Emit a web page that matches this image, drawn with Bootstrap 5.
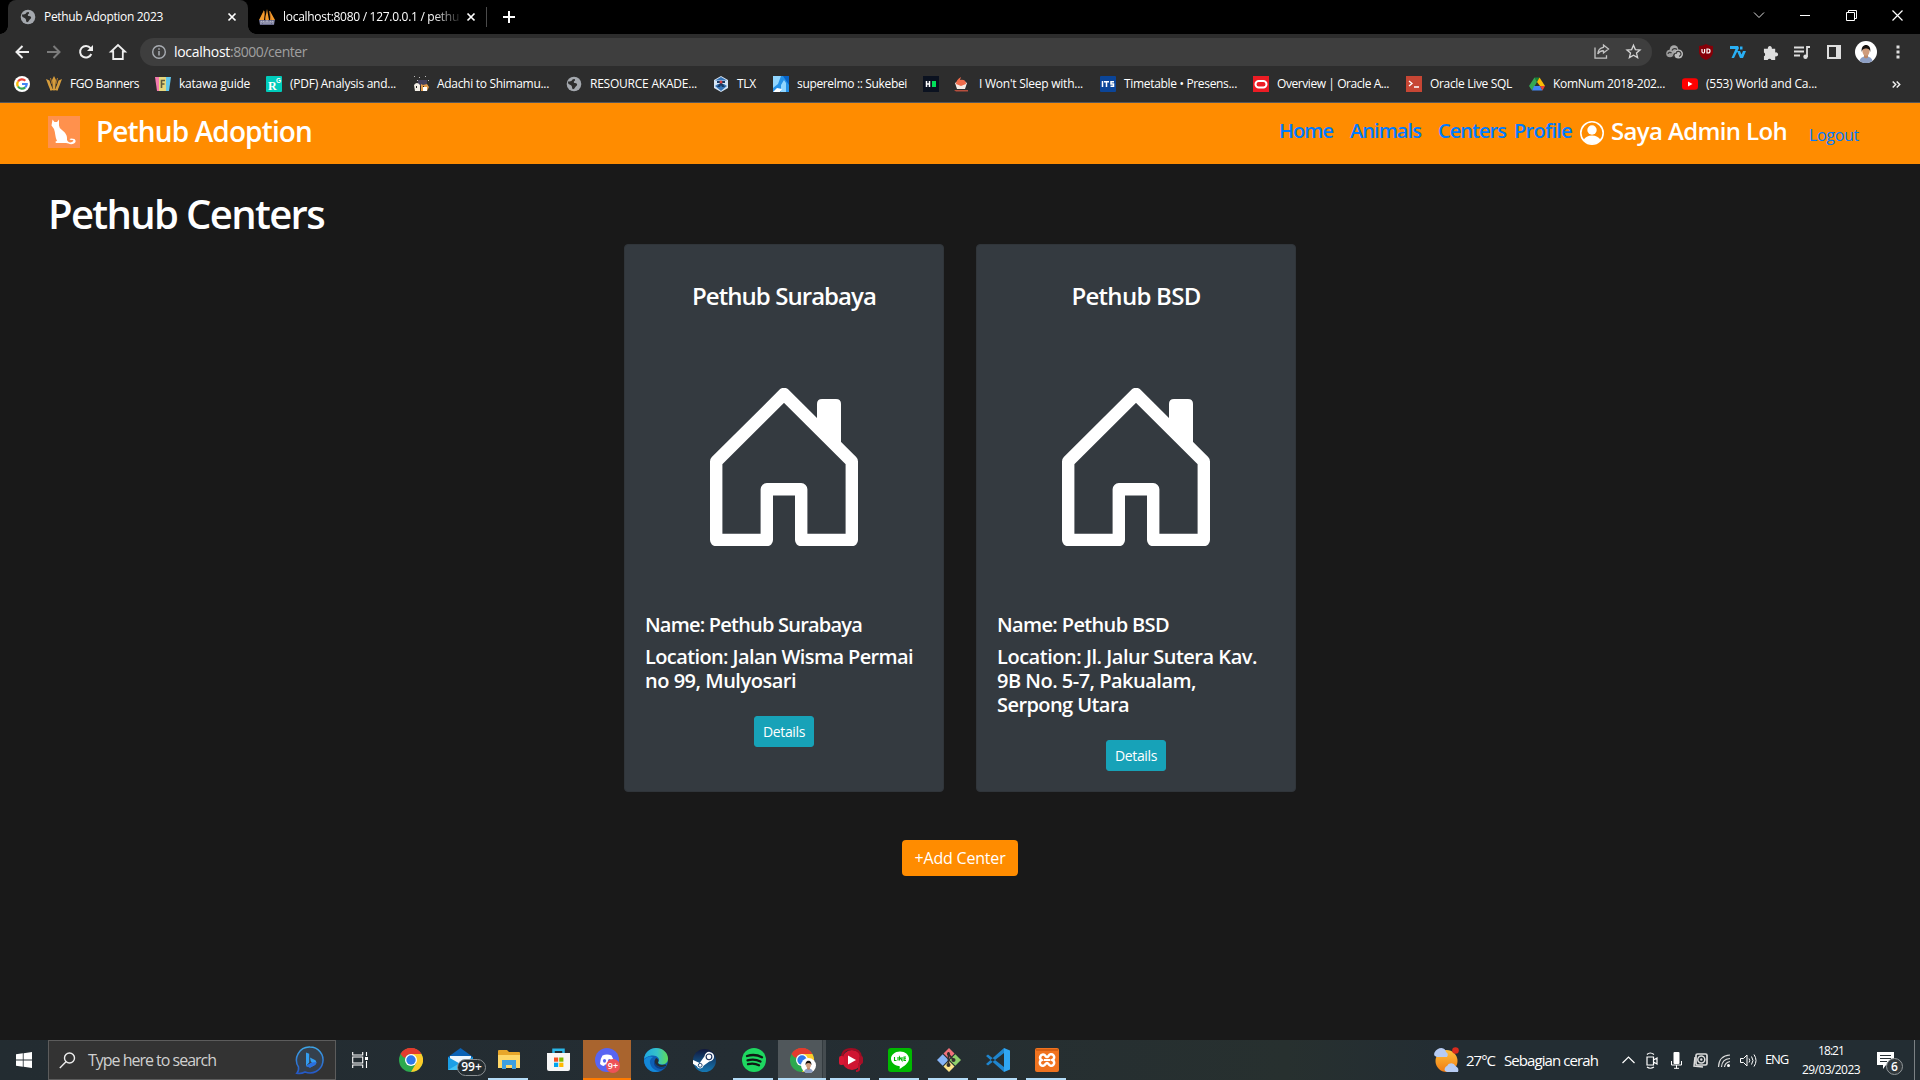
<!DOCTYPE html>
<html lang="en">
<head>
<meta charset="utf-8">
<title>Pethub Adoption 2023</title>
<link href="https://cdn.jsdelivr.net/npm/bootstrap@5.3.0/dist/css/bootstrap.min.css" rel="stylesheet">
<style>
body{font-family:"Open Sans","Noto Sans",sans-serif;font-stretch:94%;background:#191919;color:#fff;width:1920px;height:1080px;overflow:hidden;line-height:1.5}
svg{display:block;flex:none;overflow:visible}
[data-w]{display:inline-block;white-space:nowrap}
.slot{display:flex;align-items:center;justify-content:center;flex:none;width:32px}
.tabstrip{height:34px;background:#000;font-size:12px}
.tab-on{width:240px;margin-left:8px;padding:0 10px 0 12px;background:#2d2d2d;border-radius:8px 8px 0 0;position:relative}
.tab-on::before,.tab-on::after{content:"";position:absolute;bottom:0;width:8px;height:8px}
.tab-on::before{left:-8px;background:radial-gradient(circle at 0 0,transparent 7.5px,#2d2d2d 8px)}
.tab-on::after{right:-8px;background:radial-gradient(circle at 100% 0,transparent 7.5px,#2d2d2d 8px)}
.tab-off{width:239px;padding:0 9px 0 11px;border-right:1px solid #4a4a4a;height:20px}
.fade-text{width:178px;white-space:nowrap;-webkit-mask-image:linear-gradient(90deg,#000 150px,transparent 180px)}
.toolbar{height:36px;background:#2d2d2d}
.omni{width:1512px;height:28px;border-radius:14px;background:#3e3e3e;font-size:14px;line-height:20px;padding-bottom:1px;color:#a0a0a0}
.marks{height:33px;background:#2d2d2d;font-size:12px;border-bottom:1px solid #55565a;padding:0 0 4px 14px}
.marks .bm{flex:none;display:flex;align-items:center;gap:8px;height:28px}
.site-nav{height:61px;background:#ff8c00;padding:0 61px 6px 48px}
.site-nav a{color:#007bff;text-decoration:none;font-weight:600;font-size:20px;line-height:24px}
.site-nav a.thin{font-weight:400;font-size:16px}
.site-nav .logo{margin-top:3px}
.site-nav .avatar{margin-top:5px}
.brand-name{font-size:28px;font-weight:600;line-height:34px}
.user-name{font-size:24px;font-weight:600;line-height:29px}
.page{height:876px;padding:26px 48px 0}
.page h1{font-size:40px;font-weight:600;line-height:48px;margin:0 0 6px}
.center-card{width:320px;background:#343a40;border:1px solid #30353a;border-radius:4px;color:#fff;padding:36px 20px 20px}
.center-card h4{font-size:24px;font-weight:600;line-height:29px;margin:0 0 78px;text-align:center}
.center-card h5{font-size:20px;font-weight:600;line-height:24px;margin:0 0 8px}
.center-card .house{margin:0 auto 67px}
.btn-detail{background:#17a2b8;color:#fff;font-size:14px;line-height:21px;padding:4px 8px;border:1px solid #17a2b8;border-radius:3px;width:60px;height:31px;margin:15px auto 0;white-space:nowrap}
.btn-add{background:#ff8c00;color:#fff;font-size:16px;line-height:24px;width:116px;height:36px;padding:0;border:0;border-radius:4px;margin-top:48px}
.taskbar{height:40px;background:linear-gradient(90deg,#232c31,#242d33 40%,#27302f 67%,#232d33 75%)}
.search{width:288px;height:40px;background:#333;border:1px solid #5c5c5c;font-size:16px;color:#d0d0d0;padding:0 11px 0 10px}
.app{width:49px;height:40px;display:flex;align-items:center;justify-content:center;position:relative;flex:none}
.run::after{content:"";position:absolute;bottom:0;left:4px;right:5px;height:2px;background:#b4dcf7}
.app.hot{background:#a9642e}
.app.hot::after{content:"";position:absolute;bottom:0;left:0;right:0;height:2px;background:#ff7b00}
.app.sel{background:linear-gradient(90deg,#50575b 44px,#343b3f 44px,#343b3f 45px,#454c50 45px)}
.app.sel::after{left:0;right:0}
.pill{position:absolute;font-weight:600;line-height:1;text-align:center}
.pill-mail{left:20px;top:19px;width:29px;height:17px;border:1px solid #8a8f92;border-radius:9px;background:#252d31;font-size:12px;line-height:14px}
.pill-disc{left:23px;top:19px;width:14px;height:14px;border-radius:50%;background:#ed5257;font-size:9px;line-height:13px}
.tray{font-size:15px}
.clock{width:60px;font-size:12px;line-height:19px;text-align:center}
</style>
<script src="https://cdn.jsdelivr.net/npm/bootstrap@5.3.0/dist/js/bootstrap.bundle.min.js"></script>
</head>
<body>
<svg width="0" height="0" class="position-absolute">
  <defs>
    <symbol id="globe" viewBox="0 0 16 16"><circle cx="8" cy="8" r="7.3" fill="#a4a8ae"/><path d="M2.200 5.300C4 6 6 5 6.500 3.500 8 2.500 9.500 3 9 4.500 7 6 7.500 7 10 7.200c1.500.3 1.500 2.300 0 3-1 .6-1 2.600-3 3-1.500-.8-.5-2.200-1.500-3.400C4.500 8.700 2.500 8.500 2 7z" fill="#2d2d2d"/></symbol>
    <symbol id="house" viewBox="0 0 148 158"><path d="M6.200 152V73.500L74 6l67.800 67.500V152H91.200v-50.700H56.800V152Z" fill="none" stroke="#fff" stroke-width="12.400" stroke-linejoin="round"/><path d="M107 40V16q0-5 5-5h14q5 0 5 5v48z" fill="#fff"/></symbol>
    <symbol id="chrome" viewBox="0 0 24 24"><circle cx="12" cy="12" r="12" fill="#2da94f"/><path d="M12 12 1.600 6A12 12 0 0 1 22.400 6z" fill="#e33b2e"/><path d="M12 6h10.400A12 12 0 0 1 12 24l5.200-9z" fill="#fdcb2a"/><path d="M1.600 6 6.800 15h5V6z" fill="#2da94f"/><path d="M1.600 6A12 12 0 0 1 22.400 6H12A6 6 0 0 0 6.500 10L4 9z" fill="#e33b2e"/><circle cx="12" cy="12" r="6" fill="#fff"/><circle cx="12" cy="12" r="4.700" fill="#2f79ea"/></symbol>
    <symbol id="face" viewBox="0 0 22 22"><circle cx="11" cy="11" r="11" fill="#fff"/><path d="M4.500 20q.5-4 6.500-5 6 1 6.500 5a11 11 0 0 1-13 0" fill="#8d9fc4"/><path d="M9 12h4v4.500l-2 1-2-1z" fill="#b98768"/><ellipse cx="11" cy="10" rx="3.600" ry="4.800" fill="#cf9c7c"/><path d="M6.800 11C5 1.500 17 1.500 15.200 11 14.700 8 13.500 7.800 11 7.500 8.500 7.800 7.300 8 6.800 11" fill="#16120f"/></symbol>
  </defs>
</svg>

<!-- window tabs -->
<header>
<div class="tabstrip d-flex align-items-center">
  <div class="tab-on d-flex align-items-center align-self-stretch">
    <svg width="16" height="16"><use href="#globe"/></svg>
    <span class="ms-2"><span data-w="119">Pethub Adoption 2023</span></span>
    <svg class="ms-auto" width="12" height="12" viewBox="0 0 12 12"><path d="M2.500 2.500l7 7m0-7l-7 7" stroke="#fff" stroke-width="1.700"/></svg>
  </div>
  <div class="tab-off d-flex align-items-center">
    <svg width="16" height="16" viewBox="0 0 16 16"><path d="M0 11 5 1v10zM6 11 8 0l2 11zM11 11V2l5 9z" fill="#f49b2d"/><path d="M5 2l1.500 9M10.500 2l1.500 9" stroke="#b76a1d"/><path d="M0 11h16l-1 5H1z" fill="#6b6d8e"/><path d="M2 15v-3l1.500 1L5 12v3m2 0v-3h2v3m2 0v-3l1.500 1 1.500-1v3" stroke="#c9cbdc" fill="none" stroke-width=".8"/></svg>
    <div class="fade-text ms-2"><span data-w="176">localhost:8080 / 127.0.0.1 / pethu</span></div>
    <svg class="ms-auto" width="12" height="12" viewBox="0 0 12 12"><path d="M2.500 2.500l7 7m0-7l-7 7" stroke="#fff" stroke-width="1.700"/></svg>
  </div>
  <div class="slot" style="width:44px"><svg width="12" height="12" viewBox="0 0 12 12"><path d="M6 0v12M0 6h12" stroke="#fff" stroke-width="2"/></svg></div>
  <div class="d-flex ms-auto pb-1">
    <div class="slot" style="width:46px"><svg width="10" height="6" viewBox="0 0 10 6"><path d="M0 .5l5 5 5-5" fill="none" stroke="#ddd"/></svg></div>
    <div class="slot" style="width:46px"><svg width="10" height="1"><path d="M0 .5h10" stroke="#fff"/></svg></div>
    <div class="slot" style="width:46px"><svg width="11" height="11" viewBox="0 0 11 11"><path d="M.5 2.500h8v8h-8zM2.500 2.500v-2h8v8h-2" fill="none" stroke="#fff"/></svg></div>
    <div class="slot" style="width:46px"><svg width="11" height="11" viewBox="0 0 11 11"><path d="M.5.5l10 10m0-10l-10 10" stroke="#fff" stroke-width="1.200"/></svg></div>
  </div>
</div>

<!-- address row -->
<div class="toolbar d-flex align-items-center">
  <div class="d-flex ps-1" style="width:140px">
    <div class="slot ps-1"><svg width="14" height="14" viewBox="0 0 14 14"><path d="M14 7H1.500M7.500 1l-6 6 6 6" fill="none" stroke="#eee" stroke-width="2"/></svg></div>
    <div class="slot ps-1"><svg width="14" height="14" viewBox="0 0 14 14"><path d="M0 7h12.500M6.500 1l6 6-6 6" fill="none" stroke="#7b7b7b" stroke-width="2"/></svg></div>
    <div class="slot ps-1"><svg width="14" height="14" viewBox="0 0 14 14"><path d="M12.300 9A5.800 5.800 0 1 1 11.500 3.200L13 5" fill="none" stroke="#eee" stroke-width="2"/><path d="M14 0v6H8z" fill="#eee"/></svg></div>
    <div class="slot ps-1"><svg width="16" height="16" viewBox="0 0 16 16"><path d="M3.200 15V7.500H1L8 1l7 6.500h-2.200V15z" fill="none" stroke="#eee" stroke-width="1.800"/></svg></div>
  </div>
  <div class="omni d-flex align-items-center">
    <div class="slot ps-1" style="width:34px"><svg width="14" height="14" viewBox="0 0 14 14"><circle cx="7" cy="7" r="6.300" fill="none" stroke="#a9adb3" stroke-width="1.400"/><path d="M7 6v4.500M7 3.200v1.600" stroke="#a9adb3" stroke-width="1.500"/></svg></div>
    <span data-w="56" class="text-white">localhost</span><span data-w="77">:8000/center</span>
    <div class="d-flex ms-auto pe-1">
      <div class="slot"><svg width="16" height="15" viewBox="0 0 16 15"><path d="M1 3.500v10.700h11.500v-3M9.500 1l5 4-5 4V6.800C6.500 6.500 5 8 3.800 10 4 6.500 6 3.800 9.500 3.300z" fill="none" stroke="#c4c4c4" stroke-width="1.300"/></svg></div>
      <div class="slot" style="width:30px"><svg width="15" height="15" viewBox="0 0 16 16"><path d="M8 1.300l2 4.600 5 .5-3.800 3.300 1.200 4.900L8 12l-4.400 2.600 1.200-4.900L1 6.400l5-.5z" fill="none" stroke="#d4d4d4" stroke-width="1.400"/></svg></div>
    </div>
  </div>
  <div class="d-flex" style="padding-left:6px">
    <div class="slot"><svg width="17" height="14" viewBox="0 0 17 14"><circle cx="4" cy="8.500" r="3.800" fill="#9b9b9b"/><circle cx="8" cy="4.500" r="4.300" fill="#a7a7a7"/><circle cx="12.500" cy="9" r="4.500" fill="#bdbdbd"/><path d="M6 5.500a3 3 0 0 1 5-1M2 9a2 2 0 0 1 3.500-1M10 9a2.500 2.500 0 1 1 3 2.300M7 12l2-4" fill="none" stroke="#3a3a3a" stroke-width="1.200"/></svg></div>
    <div class="slot"><svg width="14" height="16" viewBox="0 0 14 16"><path d="M7 0q3 2 7 2v6q0 5-7 8-7-3-7-8V2q4 0 7-2" fill="#850008"/><path d="M3 5v2.500q0 1.500 1.300 1.500T5.600 7.500V5M8 5v4h1q2 0 2-2T9 5z" fill="none" stroke="#fff" stroke-width="1.200"/></svg></div>
    <div class="slot"><svg width="16" height="13" viewBox="0 0 16 13"><path d="M0 0h8l1 2-5 10H1.500l4-9H0zM7 5h3l1.500 3.500L13 5h3l-3 7h-3zM10 .5h2.500v3H10z" fill="#29b0f5"/></svg></div>
    <div class="slot"><svg width="15" height="15" viewBox="0 0 16 16"><path d="M1 4h4.200a2.200 2.200 0 1 1 4.200 0H13v4a2.200 2.200 0 1 1 0 4v4H9a2.200 2.200 0 0 0-4 0H1v-4a2.200 2.200 0 0 0 0-4z" fill="#dedede"/></svg></div>
    <div class="slot"><svg width="16" height="13" viewBox="0 0 16 13"><path d="M0 1.500h10M0 5.500h10M0 9.500h6M13 11V1h3" fill="none" stroke="#dedede" stroke-width="1.800"/><circle cx="11.500" cy="10.700" r="2.200" fill="#dedede"/></svg></div>
    <div class="slot"><svg width="14" height="14" viewBox="0 0 14 14"><path d="M1 1h12v12H1z" fill="none" stroke="#dedede" stroke-width="2"/><path d="M9 1h4v12H9z" fill="#dedede"/></svg></div>
    <div class="slot"><svg width="22" height="22"><use href="#face"/></svg></div>
    <div class="slot"><svg width="4" height="14" viewBox="0 0 4 14"><path d="M.5.500h3v3h-3zM.500 5.500h3v3h-3zM.500 10.500h3v3h-3z" fill="#dedede"/></svg></div>
  </div>
</div>

<!-- bookmarks -->
<div class="marks d-flex align-items-center">
  <div class="bm" style="width:32px"><svg width="16" height="16" viewBox="0 0 16 16"><circle cx="8" cy="8" r="8" fill="#fff"/><g fill="none" stroke-width="2.200"><path d="M4 5.500A4.700 4.700 0 0 1 11.300 4.700" stroke="#ea4335"/><path d="M4 5.500A4.700 4.700 0 0 0 4 10.500" stroke="#fbbc05"/><path d="M4 10.500A4.700 4.700 0 0 0 11.200 11.400" stroke="#34a853"/><path d="M11.200 11.400A4.700 4.700 0 0 0 12.700 8H8" stroke="#4285f4"/></g></svg></div>
  <div class="bm" style="width:109px"><svg width="16" height="16" viewBox="0 0 16 16"><path d="M8 0l2 4-.8 8L8 15l-1.200-3L6 4zM0 3l3.500 1.500L5 9l1.500 3.500L5 15C3 12 2 8 0 3M16 3l-3.500 1.500L11 9l-1.500 3.500L11 15c2-3 3-7 5-12" fill="#d69d3c"/><path d="M4.500 2 6 8M11.500 2 10 8" stroke="#b47a2a" fill="none"/><path d="M4 13.500h8" stroke="#d69d3c" stroke-width="1.500"/></svg><span data-w="69">FGO Banners</span></div>
  <div class="bm" style="width:111px"><svg width="16" height="16" viewBox="0 0 16 16"><path d="M0 1h5v14H2z" fill="#f37aae"/><path d="M4 1h7v14H4z" fill="#e6d67c"/><path d="M11 1h5l-2 14h-3z" fill="#62c6ea"/><path d="M6.500 12V4.500H10M6.500 8h3" fill="none" stroke="#615a3c" stroke-width="1.600"/></svg><span data-w="71">katawa guide</span></div>
  <div class="bm" style="width:147px"><svg width="16" height="16" viewBox="0 0 16 16"><rect width="16" height="16" rx="1" fill="#0cb"/><text x="2" y="13.500" font-family="Liberation Serif,serif" font-weight="700" font-size="12" fill="#fff">R</text><text x="10" y="7" font-family="Liberation Sans,sans-serif" font-weight="700" font-size="6.500" fill="#fff">G</text></svg><span data-w="106">(PDF) Analysis and...</span></div>
  <div class="bm" style="width:153px"><svg width="16" height="16" viewBox="0 0 16 16"><path d="M1 0h1v1H1zM6 1h1v1H6zM12 0h1v1h-1zM15 4h1v1h-1zM4 4h1v1H4z" fill="#bbb"/><path d="M5 4h9v6H5z" fill="#45405c"/><path d="M1 9q3-4 6 0v6H2z" fill="#f4efe7"/><path d="M8 8l2 1 4-1 2 3-2 4H8z" fill="#e29b4c"/><path d="M10 11h4v4h-4z" fill="#fff"/><path d="M3 10h1v2H3zM10 10h1v1h-1z" fill="#222"/></svg><span data-w="112">Adachi to Shimamu...</span></div>
  <div class="bm" style="width:147px"><svg width="16" height="16"><use href="#globe"/></svg><span data-w="107">RESOURCE AKADE...</span></div>
  <div class="bm" style="width:60px"><svg width="16" height="16" viewBox="0 0 16 16"><path d="M8 0l7 4v8l-7 4-7-4V4z" fill="#d6e5f5"/><path d="M8 1l6 3.500H2zM2 10l6 5 6-5-3-2H5z" fill="#3774b5"/><path d="M4 5h8v2H9l3 4H9L8 9l-1 2H4l3-4H4z" fill="#173963"/><circle cx="8" cy="6" r="1.500" fill="#d64040"/></svg><span data-w="19">TLX</span></div>
  <div class="bm" style="width:150px"><svg width="16" height="16" viewBox="0 0 16 16"><path d="M0 0h16v16H0z" fill="#2491e8"/><path d="M0 0h8L5 8 0 12zM8 9l3-5 2 3v9H8z" fill="#91d6ff"/><path d="M0 16l4-4 5 1-2 3z" fill="#fff"/><path d="M10 0h6v9z" fill="#0763c7"/></svg><span data-w="110">superelmo :: Sukebei</span></div>
  <div class="bm" style="width:30px"><svg width="16" height="16" viewBox="0 0 16 16"><path d="M0 0h16v16H0z" fill="#0b1220"/><path d="M3.500 5v6M6.500 5v6M3.500 8h3" stroke="#fff" stroke-width="1.500"/><path d="M9 5h4v6H9z" fill="#00e05a"/></svg></div>
  <div class="bm" style="width:147px"><svg width="16" height="16" viewBox="0 0 16 16"><path d="M2 7q6-5 12 0l-2 6H4z" fill="#f5ebe4"/><path d="M3 8Q3 4 8 1l-1 3q6-1 6 4l-5 2z" fill="#ef6b4a"/><path d="M1 14h14v1.500H3z" fill="#b64e3d"/></svg><span class="ps-0 ms-0" style="margin-left:2px"><span data-w="104" style="margin-left:2px">I Won't Sleep with...</span></span></div>
  <div class="bm" style="width:153px"><svg width="16" height="16" viewBox="0 0 16 16"><rect width="16" height="16" rx="1" fill="#0b4598"/><path d="M2.500 5v6M4 5.700h5M6.500 5v6M14 5.700h-3v2.300h2.500v2.300h-3" fill="none" stroke="#fff" stroke-width="1.500"/></svg><span data-w="113">Timetable • Presens...</span></div>
  <div class="bm" style="width:153px"><svg width="16" height="16" viewBox="0 0 16 16"><path d="M0 0h16v16H0z" fill="#ec1c24"/><rect x="2.500" y="5" width="11" height="6.500" rx="3.200" fill="none" stroke="#fff" stroke-width="2"/></svg><span data-w="112">Overview | Oracle A...</span></div>
  <div class="bm" style="width:123px"><svg width="16" height="16" viewBox="0 0 16 16"><path d="M0 0h16v16H0z" fill="#c74634"/><path d="M3 5l3 2.500L3 10M8 11h5" fill="none" stroke="#fff" stroke-width="1.300"/></svg><span data-w="82">Oracle Live SQL</span></div>
  <div class="bm" style="width:153px"><svg width="16" height="16" viewBox="0 0 16 16"><path d="M5.500 1.500h5L8 6z" fill="#188038"/><path d="M5.500 1.500 8 6l-5 8.500L0 10z" fill="#34a853"/><path d="M10.500 1.500 16 10h-5L8 6z" fill="#fbbc04"/><path d="M5 10h6l2.500 4.500H3z" fill="#4285f4"/><path d="M11 10h5l-2.500 4.500z" fill="#ea4335"/></svg><span data-w="112">KomNum 2018-202...</span></div>
  <div class="bm" style="width:194px"><svg width="16" height="16" viewBox="0 0 16 16"><rect y="2.200" width="16" height="11.500" rx="3" fill="#f00"/><path d="M6 5.500v5l4.500-2.500z" fill="#fff"/></svg><span data-w="111">(553) World and Ca...</span></div>
  <div class="slot ps-1" style="width:36px"><svg width="9" height="7" viewBox="0 0 9 7"><path d="M.7.500l3 3-3 3M4.700.500l3 3-3 3" fill="none" stroke="#eee" stroke-width="1.500"/></svg></div>
</div>
</header>

<!-- site navigation -->
<nav class="site-nav d-flex align-items-center">
  <svg width="32" height="32" viewBox="0 0 32 32" class="logo"><path d="M0 0h32v32H0z" fill="#ff914d"/><path d="M4.500 3.500 6.500 6h2.500L11 3.500v6q0 2.500 3 4.500c4 3 5.500 6 5 10l1 1.500q2 1.500 4 .5 2.500-1.500.5-2-3 .2-3-1 1.500-1.200 5 0 2.500 2.500-.5 4.500-3 1.500-5.500 0L18 27H8q-1.500-1.500 1-2C7 21 7.500 17 6 13L3.500 9.500z" fill="#fff"/></svg>
  <span class="brand-name ms-3"><span data-w="216">Pethub Adoption</span></span>
  <div class="d-flex align-items-center ms-auto" style="height:34px">
    <a href="#" style="width:71px"><span data-w="54">Home</span></a>
    <a href="#" style="width:88px"><span data-w="71">Animals</span></a>
    <a href="#" style="width:76px"><span data-w="68">Centers</span></a>
    <a href="#" style="width:66px"><span data-w="58">Profile</span></a>
    <svg class="avatar" width="24" height="24" viewBox="0 0 24 24"><circle cx="12" cy="12" r="11.200" fill="none" stroke="#fff" stroke-width="1.600"/><circle cx="12" cy="9" r="4.700" fill="#fff"/><path d="M3.500 19Q6 14.500 12 14.500T20.500 19Q17 23 12 23T3.500 19" fill="#fff"/></svg>
    <span class="user-name" style="padding-left:7px"><span data-w="176">Saya Admin Loh</span></span>
    <a href="#" class="thin pt-2" style="padding-left:22px"><span data-w="50">Logout</span></a>
  </div>
</nav>

<main class="page">
  <h1><span data-w="276">Pethub Centers</span></h1>
  <div class="d-flex justify-content-center" style="gap:32px">
    <div class="card center-card">
      <h4><span data-w="184">Pethub Surabaya</span></h4>
      <svg class="house" width="148" height="158"><use href="#house"/></svg>
      <h5><span data-w="217">Name: Pethub Surabaya</span></h5>
      <h5><span data-w="268">Location: Jalan Wisma Permai</span><br><span data-w="151">no 99, Mulyosari</span></h5>
      <button class="btn btn-detail"><span data-w="42">Details</span></button>
    </div>
    <div class="card center-card">
      <h4><span data-w="129">Pethub BSD</span></h4>
      <svg class="house" width="148" height="158"><use href="#house"/></svg>
      <h5><span data-w="172">Name: Pethub BSD</span></h5>
      <h5><span data-w="260">Location: Jl. Jalur Sutera Kav.</span><br><span data-w="199">9B No. 5-7, Pakualam,</span><br><span data-w="132">Serpong Utara</span></h5>
      <button class="btn btn-detail"><span data-w="42">Details</span></button>
    </div>
  </div>
  <div class="text-center"><button class="btn btn-add"><span data-w="91">+Add Center</span></button></div>
</main>

<!-- desktop taskbar -->
<footer class="taskbar d-flex align-items-center">
  <div class="slot" style="width:48px"><svg width="16" height="16" viewBox="0 0 16 16"><path d="M0 2.300 6.800 1.300V7.600H0zM7.600 1.200 16 0v7.600H7.600zM0 8.400h6.800v6.300L0 13.700zM7.600 8.400H16V16l-8.400-1.200z" fill="#fff"/></svg></div>
  <div class="search d-flex align-items-center">
    <svg width="17" height="17" viewBox="0 0 17 17"><circle cx="10.500" cy="6" r="5" fill="none" stroke="#eee" stroke-width="1.400"/><path d="M7 9.800.800 16" stroke="#eee" stroke-width="1.400"/></svg>
    <span class="ps-2 ms-1"><span data-w="128">Type here to search</span></span>
    <svg class="ms-auto" width="28" height="28" viewBox="0 0 28 28"><defs><linearGradient id="bg1" x1="0" y1="0" x2="0" y2="1"><stop stop-color="#3ea6e8"/><stop offset="1" stop-color="#2458c8"/></linearGradient></defs><path d="M14 1a13 13 0 1 1-5 25Q5 28 .800 27.200 3 25 2.500 21A13 13 0 0 1 14 1" fill="#35404d" stroke="url(#bg1)" stroke-width="1.500"/><path d="M10 6.500l3.200 1.300v8.700L10 20zM14 11.500l5.500 2.700q2 3-1 5L14 21.500 10 20l6-3.500-1.200-1z" fill="#339df0"/><path d="M10 20l6-3.500 4.500-.5q.3 2-2 3.300L14 21.800z" fill="#2a6fe0"/></svg>
  </div>
  <div class="app" style="width:48px"><svg width="16" height="16" viewBox="0 0 16 16"><path d="M.7 0v3h10V0M.7 16v-3h10v3M.700 5h10v6h-10z" fill="none" stroke="#fff" stroke-width="1.100"/><path d="M14.500 0v4M14.500 9v7" stroke="#fff" stroke-width="1.100"/><path d="M13 5h3v3h-3z" fill="#fff"/></svg></div>
  <div class="app" style="width:53px"><svg width="24" height="24"><use href="#chrome"/></svg></div>
  <div class="app" style="width:47px"><svg width="25" height="24" viewBox="0 0 25 24"><path d="M0 9 12.500 0 25 9v13H0z" fill="#0b62b5"/><path d="M2 8h21v8H2z" fill="#eef6fd"/><path d="M0 9l12.500 7L25 9v13H0z" fill="#1b9fe6"/><path d="M0 22l12-7 13 7z" fill="#43c4f5"/></svg><span class="pill pill-mail">99+</span></div>
  <div class="app run" style="width:49px"><svg width="22" height="20" viewBox="0 0 22 20"><path d="M0 1q0-1 1-1h8l2 2h10q1 0 1 1v15H0z" fill="#e8a62a"/><path d="M0 5h22v13H0z" fill="#ffd768"/><path d="M4 10h14v9h-4v-4H8v4H4z" fill="#3d9fe0"/></svg></div>
  <div class="app" style="width:50px"><svg width="23" height="24" viewBox="0 0 23 24"><path d="M6.500 6V1.800h10V6" fill="none" stroke="#29b6e8" stroke-width="2.500"/><path d="M0 5h23v16q0 2-2 2H2q-2 0-2-2z" fill="#f6f6f6"/><path d="M7 9.500h4.200v4.200H7z" fill="#f25022"/><path d="M12.200 9.500h4.200v4.200h-4.200z" fill="#7fba00"/><path d="M7 14.700h4.200V19H7z" fill="#00a4ef"/><path d="M12.200 14.700h4.200V19h-4.200z" fill="#ffb900"/></svg></div>
  <div class="app hot" style="width:48px"><svg width="24" height="24" viewBox="0 0 24 24"><circle cx="12" cy="12" r="12" fill="#5865f2"/><path d="M7.500 7.500Q12 5.500 16.500 7.500 19 11 19 16q-2 2-4 2l-1-1.500h-4L9 18q-2 0-4-2 0-5 2.500-8.500" fill="#fff"/><ellipse cx="9.500" cy="12.800" rx="1.600" ry="1.900" fill="#5865f2"/><ellipse cx="14.500" cy="12.800" rx="1.600" ry="1.900" fill="#5865f2"/></svg><span class="pill pill-disc">9+</span></div>
  <div class="app"><svg width="24" height="24" viewBox="0 0 24 24"><defs><linearGradient id="eg" x1="0" x2="1"><stop stop-color="#1fa8e0"/><stop offset=".55" stop-color="#35c2c9"/><stop offset="1" stop-color="#5fdd55"/></linearGradient></defs><circle cx="12" cy="12" r="12" fill="#0e5fb5"/><path d="M0 11C1 4 6 0 12 0c7 0 12 5 12 10.500 0 4-3 6-6 6s-4.500-1.300-3.700-2.500C17 11 13 7.500 9 7.500 4 7.500 1 10 0 11" fill="url(#eg)"/><path d="M9 9q-5 3-2 9 3 5 9 5-5 2-9.500 0Q0 19 0 12 4 7 9 9" fill="#1488d8"/><path d="M10.500 12q-2 8 6 9 4 0 6-3-6 2.500-9 0-2-2.500-1-4z" fill="#0b3f86"/><path d="M12 10q-3 4 1 7.500 4 3 9.500 0l-1-1q-7 1.500-7.500-2 1.500-3-2-4.500" fill="#242d33"/></svg></div>
  <div class="app" style="width:49px"><svg width="23" height="23" viewBox="0 0 24 24"><defs><linearGradient id="sg" x1="0" y1="0" x2="0" y2="1"><stop stop-color="#11173c"/><stop offset="1" stop-color="#1679b4"/></linearGradient></defs><circle cx="12" cy="12" r="12" fill="url(#sg)"/><path d="M0 11.500l7 3 5-7a5 5 0 1 1 5 5.500l-6 4.500a3.700 3.700 0 0 1-7 .5L0 15.500z" fill="#fff"/><circle cx="16.700" cy="8.200" r="3" fill="#fff" stroke="#1c315c" stroke-width="1.200"/><circle cx="7.500" cy="17" r="2" fill="none" stroke="#1c416c"/></svg></div>
  <div class="app run" style="width:49px"><svg width="24" height="24" viewBox="0 0 24 24"><circle cx="12" cy="12" r="12" fill="#1ed760"/><path d="M5 8q8-2.500 15 1.300M5.500 12.300q7-2 13 1.200M6 16.200q6-1.500 11 1.100" fill="none" stroke="#101915" stroke-width="2.300" stroke-linecap="round"/></svg></div>
  <div class="app run sel" style="width:48px"><svg width="24" height="24"><use href="#chrome"/></svg><svg class="position-absolute" style="left:23px;top:18px" width="15" height="15"><use href="#face"/></svg></div>
  <div class="app run"><svg width="24" height="24" viewBox="0 0 24 24"><circle cx="13" cy="12" r="10" fill="#cf1531"/><path d="M3 10Q3 1 12 1t10 8" fill="none" stroke="#9e0c22" stroke-width="2.200"/><rect y="8" width="5" height="9" rx="2" fill="#d91734"/><rect x="20" y="8" width="4" height="8" rx="2" fill="#a80f27"/><path d="M9 7.500v9l8-4.500z" fill="#fff"/><path d="M20 15v6q0 2-3 2" fill="none" stroke="#b5122b" stroke-width="2"/></svg></div>
  <div class="app run"><svg width="24" height="24" viewBox="0 0 24 24"><rect width="24" height="24" rx="3" fill="#00b900"/><path d="M12 3.500c5 0 9 3.200 9 7.300 0 4-5 7.700-9.500 10.200.5-2 .5-2.800-.5-3-4.500-.5-8-3.500-8-7.200 0-4 4-7.300 9-7.300" fill="#fff"/><path d="M6.500 9v3.500h2M10 9v3.500M11.500 12.500V9l2.500 3.500V9M18 9h-2v3.500h2M16 10.800h2" fill="none" stroke="#00b900" stroke-width="1.100"/></svg></div>
  <div class="app run"><svg width="24" height="24" viewBox="0 0 24 24"><path d="M12 0l5.500 5.500-5.500 5.500-5.500-5.500z" fill="#f0717a"/><path d="M5.700 6.300l5.700 5.700-5.700 5.700L0 12z" fill="#86b4f6"/><path d="M18.300 6.300 24 12l-5.700 5.700L12.600 12z" fill="#8fd16b"/><path d="M12 13l5.500 5.500L12 24l-5.500-5.500z" fill="#fbe38a"/><path d="M11.500 4v13M11.500 6l5 6" fill="none" stroke="#332f2d" stroke-width="1.700"/><circle cx="11.500" cy="17" r="2" fill="#332f2d"/><circle cx="16.500" cy="12" r="2" fill="#332f2d"/><circle cx="11.500" cy="6" r="1.600" fill="#332f2d"/></svg></div>
  <div class="app run"><svg width="24" height="24" viewBox="0 0 24 24"><path d="M0 8l2-1.500L18 19v5zM0 16l2 1.500L18 5V0z" fill="#1f86cf"/><path d="M18 0l6 2.500v19L18 24z" fill="#2fa6f3"/></svg></div>
  <div class="app run"><svg width="24" height="24" viewBox="0 0 24 24"><rect width="24" height="24" rx="2" fill="#f0731f"/><path d="M1 1h22v2H1z" fill="#d55f13"/><path d="M8.500 6.500a3 3 0 0 0-2 5.500 3 3 0 1 0 4 4q1.500-2 3 0a3 3 0 1 0 4-4 3 3 0 1 0-4-4q-1.500 2-3 0a3 3 0 0 0-2-1.500" fill="none" stroke="#fff" stroke-width="2.500"/><path d="M9 12h6" stroke="#fff" stroke-width="2"/></svg></div>

  <div class="tray d-flex align-items-center ms-auto">
    <svg width="25" height="27" viewBox="0 0 25 27"><defs><linearGradient id="sun" x1="0" y1="0" x2="0" y2="1"><stop stop-color="#ffc13a"/><stop offset="1" stop-color="#f07b14"/></linearGradient></defs><circle cx="12.500" cy="14" r="11" fill="url(#sun)"/><path d="M3 10q-4-1-2.500-4.500Q3 1 7.500 1q4 .5 4.500 4 3 1.500 1 5z" fill="#b7ccf3"/><path d="M13 25q-4-1-1.500-5 2-1 3-3 5-2 7 2 4 2 2.500 6z" fill="#b7ccf3"/><circle cx="21.500" cy="3.500" r="3.300" fill="#d92b1d"/></svg>
    <span style="width:38px;margin-left:7px"><span data-w="29">27°C</span></span>
    <span style="width:118px"><span data-w="94">Sebagian cerah</span></span>
    <svg width="13" height="8" viewBox="0 0 13 8"><path d="M.5 7l6-6 6 6" fill="none" stroke="#fff" stroke-width="1.200"/></svg>
    <div class="slot" style="width:34px"><svg width="12" height="17" viewBox="0 0 12 17"><path d="M1 5h6.500v8H1zM7.500 8 11 6v6L7.500 10M1 2.500q3-3 7 0M1 15q3 2.500 7 0" fill="none" stroke="#fff" stroke-width="1.200"/></svg></div>
    <div class="slot" style="width:14px"><svg width="11" height="17" viewBox="0 0 11 17"><rect x="2.500" width="6" height="12" rx="1" fill="#fff"/><path d="M.5 9v4h10V9M5.500 13v3.500M3 16.300h5" fill="none" stroke="#fff"/></svg></div>
    <div class="slot" style="width:34px"><svg width="15" height="15" viewBox="0 0 15 15"><rect x="3" y="1" width="11" height="11" rx="1.500" fill="none" stroke="#ddd" stroke-width="1.700"/><path d="M2 4 1 13l9 1" fill="none" stroke="#ddd" stroke-width="1.500"/><circle cx="8.300" cy="6.500" r="3.500" fill="none" stroke="#ddd" stroke-width="1.500"/><circle cx="8.300" cy="6.500" r="1.200" fill="#ddd"/></svg></div>
    <div class="slot" style="width:14px"><svg width="12" height="13" viewBox="0 0 12 13"><path d="M.5 13Q1 1.500 12 1M3.500 13q.5-8 8.500-8.500M6.500 13q.5-4.500 5.500-5.500" fill="none" stroke="#ddd" stroke-width="1.200"/><circle cx="10.500" cy="11.500" r="1.500" fill="#fff"/></svg></div>
    <div class="slot" style="width:34px"><svg width="17" height="13" viewBox="0 0 17 13"><path d="M.5 4.500h3L7 1v11L3.500 8.500h-3zM9 4.500q1.500 2 0 4M11.500 2.500q3 4 0 8M14 .500q4 6 0 12" fill="none" stroke="#fff"/></svg></div>
    <span style="font-size:13px;width:36px"><span data-w="23">ENG</span></span>
    <div class="clock"><div><span data-w="26">18:21</span></div><div><span data-w="58">29/03/2023</span></div></div>
    <div class="app" style="width:53px"><svg width="17" height="17" viewBox="0 0 17 17" class="me-1"><path d="M0 0h17v13H9l-3 4v-4H0z" fill="#fff"/><path d="M3 3.500h11M3 6.500h11M3 9.500h7" stroke="#2a3338" stroke-width="1.200"/></svg><svg class="position-absolute" style="left:25px;top:18px" width="17" height="17" viewBox="0 0 17 17"><circle cx="8.500" cy="8.500" r="8" fill="#31383c" stroke="#91979a"/><text x="8.500" y="13" text-anchor="middle" font-family="Open Sans,sans-serif" font-weight="600" font-size="12" fill="#fff">6</text></svg></div>
    <div class="vr" style="width:1px;height:40px;margin-right:5px;opacity:.4"></div>
  </div>
</footer>
<script>
// Tighten or loosen tracking so each label fills its assigned width
document.querySelectorAll('[data-w]').forEach(function (el) {
  var n = el.textContent.length;
  el.style.letterSpacing = ((el.dataset.w - el.getBoundingClientRect().width) / n) + 'px';
});
</script>
</body>
</html>
